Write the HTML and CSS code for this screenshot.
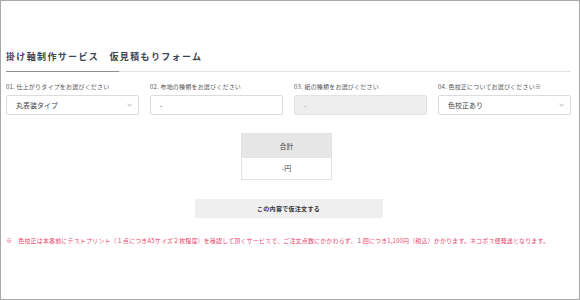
FILE: index.html
```html
<!DOCTYPE html>
<html lang="ja">
<head>
  <meta charset="UTF-8" />
  <title>仮見積もりフォーム</title>
  <meta name="viewport" content="width=device-width, initial-scale=1" />
  <link rel="stylesheet" href="styles.css">
</head>
<body>

  <main class="estimate">
    <h1 class="estimate-title">掛け軸制作サービス　仮見積もりフォーム</h1>
    <div class="title-rule"><span></span></div>

    <div class="fields">
      <div class="field">
        <label>01. 仕上がりタイプをお選びください</label>
        <div class="select">
          <span>丸表装タイプ</span>
          <svg class="chevron" viewBox="0 0 6 4" width="5" height="4"><path d="M0.6 0.8 L3 3.1 L5.4 0.8" fill="none" stroke="#888" stroke-width="0.9"/></svg>
        </div>
      </div>
      <div class="field">
        <label>02. 布地の種類をお選びください</label>
        <div class="select">
          <span>-</span>
        </div>
      </div>
      <div class="field">
        <label>03. 紙の種類をお選びください</label>
        <div class="select is-disabled">
          <span>-</span>
        </div>
      </div>
      <div class="field">
        <label>04. 色校正についてお選びください※</label>
        <div class="select">
          <span>色校正あり</span>
          <svg class="chevron" viewBox="0 0 6 4" width="5" height="4"><path d="M0.6 0.8 L3 3.1 L5.4 0.8" fill="none" stroke="#888" stroke-width="0.9"/></svg>
        </div>
      </div>
    </div>

    <div class="total-wrap">
      <table class="total">
        <tr><th>合計</th></tr>
        <tr><td>-円</td></tr>
      </table>
    </div>

    <button type="button" class="order-btn">この内容で仮注文する</button>

    <p class="note">※　色校正は本番前にテストプリント（１点につきA5サイズ２枚程度）を確認して頂くサービスで、ご注文点数にかかわらず、１回につき1,100円（税込）かかります。ネコポス便発送となります。</p>
  </main>

</body>
</html>
```

FILE: styles.css
```css
/* Reset básico */
* {
  box-sizing: border-box;
  margin: 0;
  padding: 0;
  font-family: 'Noto Sans CJK JP', 'Noto Sans', sans-serif;
}

html, body {
  width: 580px;
  height: 300px;
  overflow: hidden;
}

body {
  border: 1px solid #a9a9a9;
  background: #fff;
  color: #444;
}

.estimate {
  padding: 50px 8px 0 5px;
}

/* Titulo */
.estimate-title {
  font-size: 9px;
  line-height: 12px;
  font-weight: 700;
  color: #3d4454;
  letter-spacing: 1.35px;
  white-space: nowrap;
}

.title-rule {
  margin-top: 8px;
  height: 1px;
  background: #e2e2e2;
  display: flex;
}
.title-rule span {
  width: 113px;
  background: #8d9099;
}

/* Campos */
.fields {
  margin-top: 11px;
  display: grid;
  grid-template-columns: repeat(4, 1fr);
  column-gap: 11px;
}

.field label {
  display: block;
  font-size: 6px;
  line-height: 8px;
  color: #555;
  letter-spacing: 0.2px;
  white-space: nowrap;
  margin-bottom: 4px;
}

.select {
  height: 20px;
  border: 1px solid #dcdcdc;
  border-radius: 2px;
  background: #fff;
  display: flex;
  align-items: center;
  justify-content: space-between;
  padding: 0 6px 0 9px;
  font-size: 7px;
  color: #444;
}
.select.is-disabled {
  background: #eeeeee;
  border-color: #e2e2e2;
  color: #999;
}
.chevron {
  display: block;
}

/* Total */
.total-wrap {
  margin-top: 18px;
  padding-right: 4px;
  display: flex;
  justify-content: center;
}
.total {
  width: 91px;
  border-collapse: collapse;
  border: 1px solid #e3e3e3;
  font-size: 7px;
  color: #444;
  text-align: center;
}
.total th {
  height: 24px;
  background: #e6e6e6;
  font-weight: 400;
}
.total td {
  height: 22px;
  background: #fff;
}

/* Boton */
.order-btn {
  display: block;
  margin: 19px auto 0;
  width: 188px;
  height: 19px;
  border: none;
  background: #efefef;
  font-size: 6px;
  font-weight: 700;
  color: #333;
  letter-spacing: 0.3px;
  cursor: pointer;
}

/* Nota */
.note {
  margin-top: 19px;
  font-size: 6px;
  line-height: 8px;
  color: #e8486c;
  letter-spacing: 0.15px;
  white-space: nowrap;
}
```
